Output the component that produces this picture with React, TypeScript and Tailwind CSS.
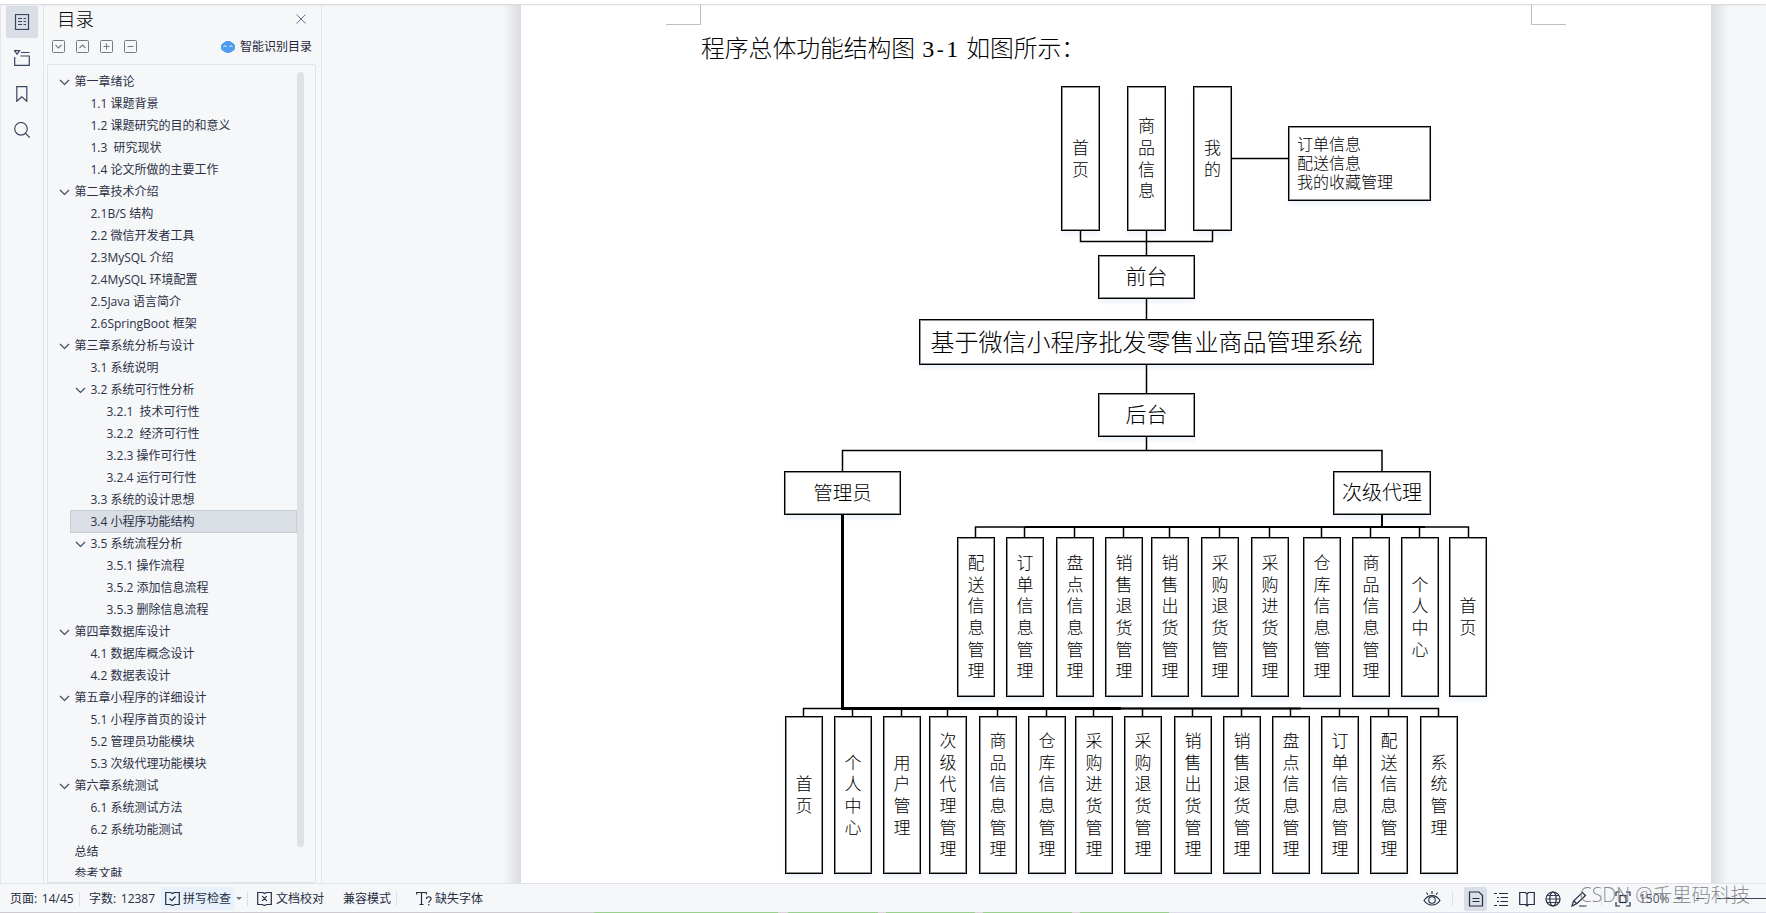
import type { ReactNode } from 'react';

interface OutlineItem {
  text: string;
  level: number;
  open?: boolean;
  active?: boolean;
}

const outline: OutlineItem[] = [
  { text: '第一章绪论', level: 0, open: true },
  { text: '1.1 课题背景', level: 1 },
  { text: '1.2 课题研究的目的和意义', level: 1 },
  { text: '1.3  研究现状', level: 1 },
  { text: '1.4 论文所做的主要工作', level: 1 },
  { text: '第二章技术介绍', level: 0, open: true },
  { text: '2.1B/S 结构', level: 1 },
  { text: '2.2 微信开发者工具', level: 1 },
  { text: '2.3MySQL 介绍', level: 1 },
  { text: '2.4MySQL 环境配置', level: 1 },
  { text: '2.5Java 语言简介', level: 1 },
  { text: '2.6SpringBoot 框架', level: 1 },
  { text: '第三章系统分析与设计', level: 0, open: true },
  { text: '3.1 系统说明', level: 1 },
  { text: '3.2 系统可行性分析', level: 1, open: true },
  { text: '3.2.1  技术可行性', level: 2 },
  { text: '3.2.2  经济可行性', level: 2 },
  { text: '3.2.3 操作可行性', level: 2 },
  { text: '3.2.4 运行可行性', level: 2 },
  { text: '3.3 系统的设计思想', level: 1 },
  { text: '3.4 小程序功能结构', level: 1, active: true },
  { text: '3.5 系统流程分析', level: 1, open: true },
  { text: '3.5.1 操作流程', level: 2 },
  { text: '3.5.2 添加信息流程', level: 2 },
  { text: '3.5.3 删除信息流程', level: 2 },
  { text: '第四章数据库设计', level: 0, open: true },
  { text: '4.1 数据库概念设计', level: 1 },
  { text: '4.2 数据表设计', level: 1 },
  { text: '第五章小程序的详细设计', level: 0, open: true },
  { text: '5.1 小程序首页的设计', level: 1 },
  { text: '5.2 管理员功能模块', level: 1 },
  { text: '5.3 次级代理功能模块', level: 1 },
  { text: '第六章系统测试', level: 0, open: true },
  { text: '6.1 系统测试方法', level: 1 },
  { text: '6.2 系统功能测试', level: 1 },
  { text: '总结', level: 0 },
  { text: '参考文献', level: 0 },
];

const indents = ['pl-[11px]', 'pl-[27px]', 'pl-[43px]'];

// Diagram nodes, in page coordinates
const frontNodes = [
  { x: 540, text: '首页' },
  { x: 606, text: '商品信息' },
  { x: 672, text: '我的' },
];

const agentNodes = [
  { x: 436, text: '配送信息管理' },
  { x: 485, text: '订单信息管理' },
  { x: 535, text: '盘点信息管理' },
  { x: 584, text: '销售退货管理' },
  { x: 630, text: '销售出货管理' },
  { x: 680, text: '采购退货管理' },
  { x: 730, text: '采购进货管理' },
  { x: 782, text: '仓库信息管理' },
  { x: 831, text: '商品信息管理' },
  { x: 880, text: '个人中心' },
  { x: 928, text: '首页' },
];

const adminNodes = [
  { x: 264, text: '首页' },
  { x: 313, text: '个人中心' },
  { x: 362, text: '用户管理' },
  { x: 408, text: '次级代理管理' },
  { x: 458, text: '商品信息管理' },
  { x: 507, text: '仓库信息管理' },
  { x: 554, text: '采购进货管理' },
  { x: 603, text: '采购退货管理' },
  { x: 653, text: '销售出货管理' },
  { x: 702, text: '销售退货管理' },
  { x: 751, text: '盘点信息管理' },
  { x: 800, text: '订单信息管理' },
  { x: 849, text: '配送信息管理' },
  { x: 899, text: '系统管理' },
];

interface IconProps {
  children: ReactNode;
  size?: number;
  className?: string;
}

const Icon = ({ children, size = 16, className = '' }: IconProps) => (
  <svg
    width={size}
    height={size}
    viewBox={`0 0 ${size} ${size}`}
    fill="none"
    stroke="currentColor"
    strokeWidth="1.2"
    className={`shrink-0 ${className}`}
  >
    {children}
  </svg>
);

const Divider = ({ className = '' }: { className?: string }) => (
  <div className={`w-px h-[14px] shrink-0 bg-[#dcdfe4] ${className}`} />
);

const SideRail = () => (
  <div className="w-[44px] shrink-0 border-r border-[#e1e4ea] border-l border-l-[#e4e6eb] text-[#3b4560] flex flex-col items-center pt-[2px]">
    <div className="w-8 h-8 mr-[1px] rounded-[2px] bg-[#dadee6] flex items-center justify-center">
      <Icon>
        <rect x="1.500" y="0.500" width="13" height="15" />
        <path d="M4 4.500h4M4 7.500h4M4 10.500h4M9.500 4.500H12M9.500 7.500H12M9.500 10.500H12" />
      </Icon>
    </div>
    <Icon className="mt-[12px]">
      <path d="M0.600 0.700h5L3.100 4.300zM7 2.500h8.500M0.700 7v8.300h14.600V6H6.500" />
    </Icon>
    <Icon className="mt-5">
      <path d="M2.800 0.600h10v14.700l-5-4.500-5 4.500z" />
    </Icon>
    <Icon className="mt-5">
      <circle cx="7" cy="6.800" r="6.300" />
      <path d="M11.300 11.200l4.500 4.500" />
    </Icon>
  </div>
);

const SquareIcon = ({ d }: { d: string }) => (
  <Icon size={13} className="text-[#777a80]">
    <rect x="0.500" y="0.500" width="12" height="12" rx="1" strokeWidth="1" />
    <path d={d} strokeWidth="1.100" />
  </Icon>
);

const OutlineRow = ({ text, level, open, active }: OutlineItem) => (
  <div className="h-[22px] shrink-0 flex relative">
    {active && <div className="absolute left-[22px] right-0 top-[-1px] h-[23px] bg-[#dadee5] border border-[#c6ced8]" />}
    <div className={`relative flex items-center ${indents[level]}`}>
      <div className="w-[15.5px]">
        {open && (
          <svg width="11" height="7" viewBox="0 0 11 7" fill="none" stroke="#414a5e" strokeWidth="1.200">
            <path d="M1 1l4.500 4.500L10 1" />
          </svg>
        )}
      </div>
      <span className="whitespace-pre">{text}</span>
    </div>
  </div>
);

const OutlinePanel = () => (
  <div className="w-[278px] shrink-0 border-r border-[#e1e4ea] flex flex-col pl-[3px] pr-[5px]">
    <div className="h-[30px] flex items-center justify-between pl-[10px] pr-[10px]">
      <h2 className="text-[18.5px] leading-none font-light text-black">目录</h2>
      <svg width="10" height="10" viewBox="0 0 10 10" stroke="#6b7488" strokeWidth="1">
        <path d="M0.500 0.500l9 9M9.500 0.500l-9 9" />
      </svg>
    </div>
    <div className="h-[30px] flex items-center pl-[5px] pb-[6px]">
      <div className="flex gap-[11px]">
        <SquareIcon d="M3.500 5l3 3 3-3" />
        <SquareIcon d="M3.500 8l3-3 3 3" />
        <SquareIcon d="M6.500 3.500v6M3.500 6.500h6" />
        <SquareIcon d="M3.500 6.500h6" />
      </div>
      <div className="ml-auto mr-1 flex items-center gap-[5px] pt-px text-xs text-[#1f2637]">
        <svg width="14" height="12" viewBox="0 0 14 12">
          <rect x="1.500" y="0" width="11" height="12" rx="5" fill="#4e9bf0" />
          <rect x="0" y="2" width="14" height="8" rx="3.500" fill="#4e9bf0" />
          <path d="M2.500 6l1.500-1.500L5.500 6M8.500 6L10 4.500 11.500 6" stroke="#fff" fill="none" />
        </svg>
        智能识别目录
      </div>
    </div>
    <div className="h-[819px] border border-[#e1e4ea] rounded-[2px] flex pt-[6px] pb-[5px]">
      <div className="w-[249px] overflow-hidden flex flex-col text-xs text-[#2a3146]">
        {outline.map((item) => (
          <OutlineRow key={item.text} {...item} />
        ))}
      </div>
      <div className="mt-px w-[7px] h-[775px] rounded-full bg-[#dfe2e5]" />
    </div>
  </div>
);

interface BoxProps {
  x: number;
  y: number;
  w: number;
  h: number;
  className?: string;
  children: ReactNode;
}

const Box = ({ x, y, w, h, className = '', children }: BoxProps) => (
  <div
    className={`absolute bg-white border border-black flex items-center justify-center whitespace-nowrap shadow-[inset_0_0_0_1px_#00000070,0_4px_4px_#f0f4fc] ${className}`}
    style={{ left: x, top: y, width: w, height: h }}
  >
    {children}
  </div>
);

const Column = ({ x, y, w, h, text }: { x: number; y: number; w: number; h: number; text: string }) => (
  <Box x={x} y={y} w={w} h={h}>
    <span className="w-[17px] text-[17px] leading-[21.6px] whitespace-normal break-all">{text}</span>
  </Box>
);

const Connectors = () => (
  <svg width="1190" height="880" className="absolute left-0 top-0" fill="none" stroke="#000" strokeWidth="1.500">
    <path d="M559.500 226v11.500h132V226M625.500 226v26M711 154.500h57M625.500 294v22M625.500 360v30M625.500 432v14.500" />
    <path d="M321.500 468v-21.500h539.500V468" />
    <path d="M861 510v13" strokeWidth="2" />
    <path d="M454.500 534v-11H947.500v11" />
    <path d="M504 523h400" strokeWidth="2" />
    {agentNodes.slice(1, -1).map((n) => (
      <path key={n.x} d={`M${n.x + 18.5} 523v11`} />
    ))}
    <path d="M282.500 713v-8.500H917.500v8.500" />
    <path d="M321.500 510v194.500H600" strokeWidth="3" />
    <path d="M600 704.500h180" strokeWidth="2" />
    {adminNodes.slice(1, -1).map((n) => (
      <path key={n.x} d={`M${n.x + 18.5} 704v9`} />
    ))}
  </svg>
);

const Page = () => (
  <div className="relative w-[1190px] h-full shrink-0 bg-white text-black font-light">
    <svg width="1190" height="24" className="absolute left-0 top-0" fill="none" stroke="#bdbdbd">
      <path d="M145 20.500h34.500V0M1045 20.500h-34.500V0" />
    </svg>
    <p className="pl-[180px] pt-[26px] text-[23.8px] leading-9 whitespace-pre">
      程序总体功能结构图
      <span className="pl-[7px] pr-[8px] text-[24px] font-['Liberation_Serif'] font-normal">
        3<span className="text-[20px] font-['Liberation_Mono']">-</span>1
      </span>
      如图所示：
    </p>
    {frontNodes.map((n) => (
      <Column key={n.x} x={n.x} y={82} w={39} h={145} text={n.text} />
    ))}
    <Box x={767} y={122} w={143} h={75} className="!justify-start pl-[8px] text-[16px] leading-[19px]">
      <div>
        <div>订单信息</div>
        <div>配送信息</div>
        <div>我的收藏管理</div>
      </div>
    </Box>
    <Box x={577} y={251} w={97} h={44} className="text-[21px]">前台</Box>
    <Box x={398} y={315} w={455} h={46} className="text-[24px]">基于微信小程序批发零售业商品管理系统</Box>
    <Box x={577} y={389} w={97} h={44} className="text-[21px]">后台</Box>
    <Box x={263} y={467} w={117} h={44} className="text-[19.500px]">管理员</Box>
    <Box x={812} y={467} w={98} h={44} className="text-[20px]">次级代理</Box>
    {agentNodes.map((n) => (
      <Column key={n.x} x={n.x} y={533} w={38} h={160} text={n.text} />
    ))}
    {adminNodes.map((n) => (
      <Column key={n.x} x={n.x} y={712} w={38} h={158} text={n.text} />
    ))}
    <Connectors />
  </div>
);

const StatusBar = () => (
  <div className="h-[28px] shrink-0 border-t border-[#dfe2e8] bg-[#f6f7f9] flex items-center pt-[2px] text-xs text-[#252d42] relative">
    <span className="w-[79px] pl-[10px] [word-spacing:1.500px]">页面: 14/45</span>
    <Divider />
    <span className="w-[81px] pl-[9px] [word-spacing:1.500px]">字数: 12387</span>
    <div className="w-[73px] h-[23px] bg-[#e8f1fc] flex items-center gap-[3px] pl-1">
      <Icon size={15}>
        <path d="M5.500 1.500H0.700v12h4.500l2.300 1 2.300-1h4.500v-12H9.500M5.500 1.500l2 1 2-1M4.500 7.500l2.300 2.200L10.500 5.500" />
      </Icon>
      拼写检查
    </div>
    <div className="ml-[2px] w-0 h-0 border-x-[3px] border-x-transparent border-t-[3px] border-t-[#6b7488]" />
    <Divider className="ml-[5px]" />
    <Icon size={15} className="ml-[9px] mr-1">
      <path d="M5.500 1.500H0.700v12h4.500l2.300 1 2.300-1h4.500v-12H9.500M5.500 1.500l2 1 2-1M5.200 5.200l4.600 4.600M9.800 5.200L5.200 9.800" />
    </Icon>
    文档校对
    <span className="ml-[19px]">兼容模式</span>
    <Divider className="ml-[5px]" />
    <Icon size={16} className="ml-[19px] mr-[3px]">
      <path d="M0.700 3.500V1.500h9.600v2M5.500 1.500v12M3.500 13.500h4M10.500 8c0-3 4.500-3 4.500 0 0 1.500-2.200 1.800-2.200 3.800M12.800 13v1.500" />
    </Icon>
    缺失字体

    <div className="ml-auto flex items-center h-full">
      <Icon size={18}>
        <path d="M1 10.500c4-6.500 12-6.500 16 0-4 6-12 6-16 0zM9 1v3M3.500 2.500l1.300 2.200M14.500 2.500l-1.300 2.200" strokeWidth="1.100" />
        <circle cx="9" cy="10" r="3.300" strokeWidth="1.100" />
      </Icon>
      <Divider className="ml-[11px] mr-[11px]" />
      <div className="w-[23px] h-6 rounded-[2px] bg-[#dadee6] flex items-center justify-center">
        <Icon>
          <path d="M1.500 1h9.500l3.500 3.500V15h-13zM4.500 7.500h7M4.500 10.500h7" />
        </Icon>
      </div>
      <Icon className="ml-[7px]">
        <path d="M0 2.500h3M5 2.500h9M3 6.500h2M6.500 6.500H14M3 10.500h2M6.500 10.500H14M0 14.500h3M5 14.500h9" />
      </Icon>
      <Icon className="ml-[9px]">
        <path d="M8 3L6.500 1.500H0.700v12h5.800L8 15l1.500-1.500h5.800v-12H9.500zM8 3v12" />
      </Icon>
      <Icon className="ml-[10px]">
        <circle cx="8" cy="8" r="7" />
        <ellipse cx="8" cy="8" rx="3.200" ry="7" />
        <path d="M1 8h14M2 4.500h12M2 11.500h12" strokeWidth="0.900" />
      </Icon>
      <Icon className="ml-[10px]">
        <path d="M1 15l1.500-5L11.500 1.500l3 3L6 12.500zM3 10l3 3M8 15h7.500" />
      </Icon>
      <Divider className="ml-[14px] mr-[13px]" />
      <Icon>
        <path d="M5 1H1v4M11 1h4v4M1 11v4h4M15 11v4h-4" />
        <rect x="5" y="4.500" width="6" height="7" />
      </Icon>
      <span className="ml-[8px] w-[31px] text-[#4a5266]">150%</span>
      <div className="ml-[6px] w-0 h-0 border-x-[3px] border-x-transparent border-t-[3px] border-t-[#6b7488]" />
      <div className="ml-[14px] w-2 h-px bg-[#3b4560]" />
      <div className="ml-[13px] w-[49px] h-px bg-[#3b4560]" />
    </div>
    <span className="absolute right-[16px] top-[-3px] text-[19.5px] leading-[28px] font-light text-[#7d7f83]/90 whitespace-nowrap">
      CSDN @千里码科技
    </span>
  </div>
);

export default function App() {
  return (
    <div className="w-[1766px] h-[913px] overflow-hidden flex flex-col bg-[#f6f7f9] font-['Open_Sans','Noto_Sans_CJK_SC',sans-serif]">
      <div className="h-1 shrink-0 bg-white relative z-10 shadow-[0_1px_2px_#d4d6da]" />
      <div className="h-[879px] flex">
        <SideRail />
        <OutlinePanel />
        <div className="flex-1 flex overflow-hidden">
          <div className="w-[199px] shrink-0 flex justify-end">
            <div className="w-[18px] bg-gradient-to-r from-[#f6f7f9] to-[#dadcdf]" />
          </div>
          <Page />
          <div className="w-[18px] bg-gradient-to-l from-[#f6f7f9] to-[#dadcdf]" />
        </div>
      </div>
      <StatusBar />
      <div className="h-[2px] shrink-0 flex items-end">
        <div className="w-[594px] h-px bg-[#cdcbd0]" />
        <div className="w-[184px] h-px bg-[#9bcf8d]" />
        <div className="w-[10px] h-px bg-[#ddd3d8]" />
        <div className="w-[90px] h-px bg-[#9bcf8d]" />
        <div className="w-[8px] h-px bg-[#ddd3d8]" />
        <div className="w-[89px] h-px bg-[#9bcf8d]" />
        <div className="w-[8px] h-px bg-[#ddd3d8]" />
        <div className="w-[89px] h-px bg-[#9bcf8d]" />
        <div className="w-[8px] h-px bg-[#ddd3d8]" />
        <div className="w-[89px] h-px bg-[#9bcf8d]" />
        <div className="flex-1 h-px bg-[#dcdde6]" />
      </div>
    </div>
  );
}
